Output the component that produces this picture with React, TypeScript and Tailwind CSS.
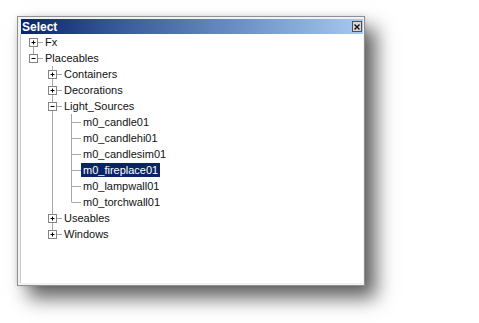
import React from "react";

type Node = { label: string; children?: Node[]; open?: boolean };

const tree: Node[] = [
  { label: "Fx", children: [{ label: "x" }] },
  {
    label: "Placeables",
    open: true,
    children: [
      { label: "Containers", children: [{ label: "x" }] },
      { label: "Decorations", children: [{ label: "x" }] },
      {
        label: "Light_Sources",
        open: true,
        children: [
          { label: "m0_candle01" },
          { label: "m0_candlehi01" },
          { label: "m0_candlesim01" },
          { label: "m0_fireplace01" },
          { label: "m0_lampwall01" },
          { label: "m0_torchwall01" },
        ],
      },
      { label: "Useables", children: [{ label: "x" }] },
      { label: "Windows", children: [{ label: "x" }] },
    ],
  },
];

type Row = {
  label: string;
  rails: boolean[]; // ancestor columns that continue downwards
  first: boolean;
  last: boolean;
  expandable: boolean;
  open: boolean;
};

function flatten(nodes: Node[], rails: boolean[], root: boolean, out: Row[]) {
  nodes.forEach((n, i) => {
    const last = i === nodes.length - 1;
    out.push({
      label: n.label,
      rails,
      first: root && i === 0,
      last,
      expandable: !!n.children,
      open: !!n.open,
    });
    if (n.children && n.open) flatten(n.children, [...rails, !last], false, out);
  });
  return out;
}

const rows = flatten(tree, [], true, []);
const LINE = "#a8a8a8";

function Rail({ on }: { on: boolean }) {
  return (
    <svg width="19" height="16" className="shrink-0">
      {on && <line x1="9.5" y1="0" x2="9.5" y2="16" stroke={LINE} />}
    </svg>
  );
}

function Connector({ row }: { row: Row }) {
  return (
    <svg width="19" height="16" className="shrink-0">
      {!row.first && <line x1="9.5" y1="0" x2="9.5" y2="8" stroke={LINE} />}
      {!row.last && <line x1="9.5" y1="8" x2="9.5" y2="16" stroke={LINE} />}
      <line x1="9.5" y1="8.5" x2="19" y2="8.5" stroke={LINE} />
      {row.expandable && (
        <g>
          <rect x="5.5" y="4.5" width="8" height="8" fill="#fff" stroke="#848484" />
          <line x1="7.5" y1="8.5" x2="11.5" y2="8.5" stroke="#000" />
          {!row.open && <line x1="9.5" y1="6.5" x2="9.5" y2="10.5" stroke="#000" />}
        </g>
      )}
    </svg>
  );
}

export default function App() {
  return (
    <div className="min-h-[323px] w-[479px] bg-white pl-[17px] pt-[16px]">
      <div className="flex h-[270px] w-[348px] flex-col border border-[#909090] bg-[#f2f2f2] p-[2px] pr-[1px] shadow-[11px_12px_18px_rgba(0,0,0,0.62),0_0_5px_rgba(0,0,0,0.12)]">
        <div className="ml-[1px] flex h-[15px] shrink-0 items-center justify-between bg-gradient-to-r from-[#0a246a] via-[#3a5c9c] via-30% to-[#a6caf0] pl-[1px]">
          <span className="text-[12px] font-bold leading-none text-white [font-family:'Liberation_Sans',Arial,sans-serif]">
            Select
          </span>
          <div className="mr-[1px] flex h-[11px] w-[10px] items-center justify-center border border-[#505050] bg-[#d8d8d8]">
            <svg width="6" height="6" viewBox="0 0 6 6">
              <path d="M0.5 0.5 L5.5 5.5 M5.5 0.5 L0.5 5.5" stroke="#111" strokeWidth="1.4" />
            </svg>
          </div>
        </div>
        <div className="flex-1 border-l border-[#c8c8c8] bg-white pl-[3px] [font-family:'Liberation_Sans',Arial,sans-serif]">
          {rows.map((row, i) => (
            <div key={i} className="flex h-[16px] items-center">
              {row.rails.map((on, j) => (
                <Rail key={j} on={on} />
              ))}
              <Connector row={row} />
              <span
                className={
                  "px-[2px] text-[11px] leading-[14px] " +
                  (row.label === "m0_fireplace01" ? "bg-[#0a246a] text-white" : "text-[#111]")
                }
              >
                {row.label}
              </span>
            </div>
          ))}
        </div>
      </div>
    </div>
  );
}
